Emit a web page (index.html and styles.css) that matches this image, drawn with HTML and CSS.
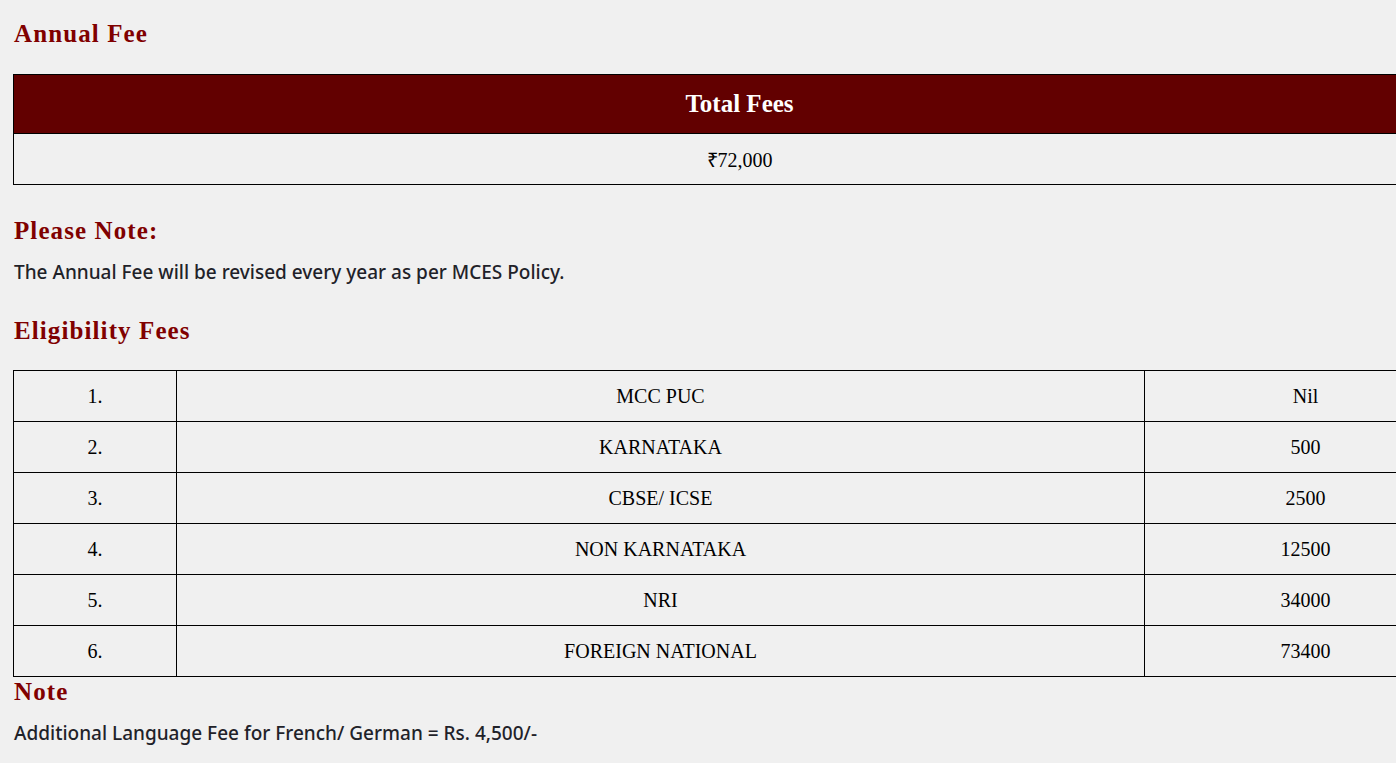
FILE: index.html
```html
<!DOCTYPE html>
<html lang="en">
<head>
<meta charset="utf-8">
<title>Fees</title>
<link rel="stylesheet" href="styles.css">
</head>
<body>
<main class="page">
  <h2 class="heading heading-first">Annual Fee</h2>
  <table class="fee-table total-table">
    <thead>
      <tr><th class="total-head">Total Fees</th></tr>
    </thead>
    <tbody>
      <tr><td class="cell">₹72,000</td></tr>
    </tbody>
  </table>

  <h2 class="heading heading-note">Please Note:</h2>
  <p class="text">The Annual Fee will be revised every year as per MCES Policy.</p>

  <h2 class="heading heading-elig">Eligibility Fees</h2>
  <table class="fee-table elig-table">
    <colgroup>
      <col class="col-num">
      <col class="col-name">
      <col class="col-fee">
    </colgroup>
    <tbody>
      <tr><td class="cell">1.</td><td class="cell">MCC PUC</td><td class="cell">Nil</td></tr>
      <tr><td class="cell">2.</td><td class="cell">KARNATAKA</td><td class="cell">500</td></tr>
      <tr><td class="cell">3.</td><td class="cell">CBSE/ ICSE</td><td class="cell">2500</td></tr>
      <tr><td class="cell">4.</td><td class="cell">NON KARNATAKA</td><td class="cell">12500</td></tr>
      <tr><td class="cell">5.</td><td class="cell">NRI</td><td class="cell">34000</td></tr>
      <tr><td class="cell">6.</td><td class="cell">FOREIGN NATIONAL</td><td class="cell">73400</td></tr>
    </tbody>
  </table>

  <h2 class="heading heading-last">Note</h2>
  <p class="text">Additional Language Fee for French/ German = Rs. 4,500/-</p>
</main>
</body>
</html>
```

FILE: styles.css
```css
html {
  overflow: hidden;
  background: #f0f0f0;
}

body {
  margin: 0;
  background: #f0f0f0;
}

.page {
  padding: 0 0 0 13px;
  width: 1453px;
}

.heading {
  font-family: "Liberation Serif", "Times New Roman", serif;
  font-weight: 700;
  font-size: 25px;
  line-height: 30px;
  letter-spacing: 1.1px;
  color: #800000;
  margin: 0;
  padding-left: 1px;
}

.heading-first {
  padding-top: 19px;
  margin-bottom: 25px;
}

.heading-note {
  margin-top: 31px;
  margin-bottom: 14px;
}

.heading-elig {
  margin-top: 32px;
  margin-bottom: 24px;
}

.heading-last {
  margin-top: 0;
  margin-bottom: 14px;
}

.text {
  font-family: "Noto Sans", "Open Sans", sans-serif;
  font-weight: 500;
  font-size: 19px;
  line-height: 24px;
  color: #1f2229;
  margin: 0;
  padding-left: 1px;
}

.fee-table {
  width: 1453px;
  border-collapse: collapse;
  font-family: "Liberation Serif", "Times New Roman", serif;
  font-size: 20px;
  color: #000;
  table-layout: fixed;
}

.total-head {
  background: #620000;
  color: #fff;
  font-size: 25px;
  font-weight: 700;
  height: 58px;
  padding: 0;
  border: 1px solid #000;
  text-align: center;
}

.cell {
  border: 1px solid #000;
  height: 50px;
  padding: 0;
  text-align: center;
  vertical-align: middle;
}

.col-num { width: 163px; }
.col-name { width: 968px; }
.col-fee { width: 322px; }
```
